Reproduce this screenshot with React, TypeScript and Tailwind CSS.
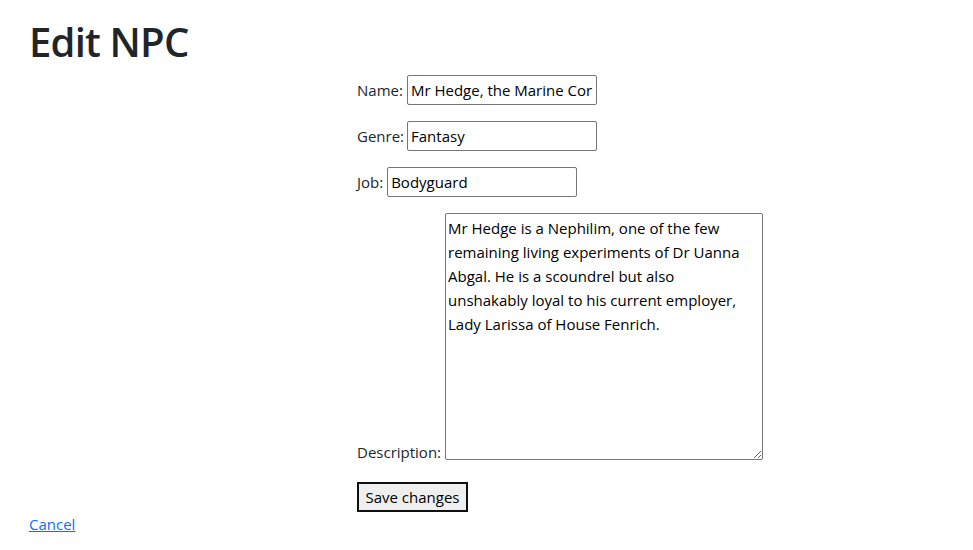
import React from 'react';

const DESCRIPTION =
  'Mr Hedge is a Nephilim, one of the few remaining living experiments of Dr Uanna Abgal. He is a scoundrel but also unshakably loyal to his current employer, Lady Larissa of House Fenrich.';

const inputClass =
  'h-[30px] w-[190px] rounded-[2px] border border-[#767676] bg-white px-[3px] text-[15px] text-black outline-none';

const EditNpcPage: React.FC = () => {
  return (
    <div className="min-h-screen bg-white px-[29px] pt-[18px] font-['Open_Sans',sans-serif] text-[15px] leading-[24px] text-[#212529]">
      <h1 className="text-[40px] font-semibold leading-[48px] tracking-[-0.8px]">Edit NPC</h1>

      <form className="ml-[328px] mt-[9px]" onSubmit={(e) => e.preventDefault()}>
        <div className="mb-[16px] flex items-center gap-[4px]">
          <label htmlFor="name">Name:</label>
          <input id="name" className={inputClass} defaultValue="Mr Hedge, the Marine Corps veteran" />
        </div>
        <div className="mb-[16px] flex items-center gap-[3px]">
          <label htmlFor="genre">Genre:</label>
          <input id="genre" className={inputClass} defaultValue="Fantasy" />
        </div>
        <div className="mb-[16px] flex items-center gap-[4px]">
          <label htmlFor="job">Job:</label>
          <input id="job" className={inputClass} defaultValue="Bodyguard" />
        </div>
        <div className="flex items-end gap-[4px]">
          <label htmlFor="description" className="leading-[16px]">Description:</label>
          <textarea
            id="description"
            className="h-[247px] w-[318px] rounded-[2px] border border-[#767676] bg-white py-[2px] pl-[2px] pr-[22px] text-[15px] leading-[24px] text-black outline-none"
            defaultValue={DESCRIPTION}
          />
        </div>
        <button
          type="submit"
          className="mt-[22px] h-[30px] w-[111px] border-2 border-[#101010] bg-[#efefef] text-[15px] leading-[20px] text-black"
        >
          Save changes
        </button>
      </form>

      <a href="#" className="block w-fit text-[#0d6efd] underline">
        Cancel
      </a>
    </div>
  );
};

export default function App() {
  return <EditNpcPage />;
}
